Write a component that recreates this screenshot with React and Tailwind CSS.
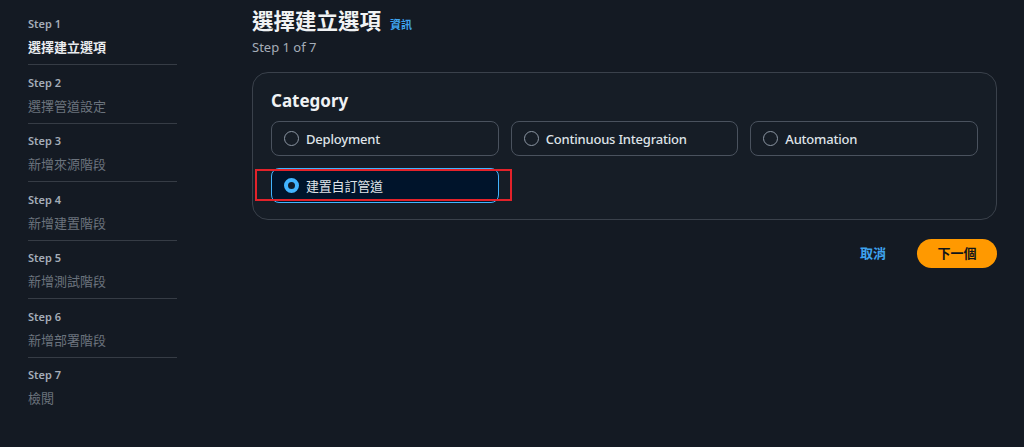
import React from "react";

const steps = [
  ["Step 1", "選擇建立選項"],
  ["Step 2", "選擇管道設定"],
  ["Step 3", "新增來源階段"],
  ["Step 4", "新增建置階段"],
  ["Step 5", "新增測試階段"],
  ["Step 6", "新增部署階段"],
  ["Step 7", "檢閱"],
];

function Radio({ checked }) {
  if (checked) {
    return (
      <span className="w-[15px] h-[15px] rounded-full border-[4px] border-[#42b4ff] bg-[#0f1b2a] shrink-0" />
    );
  }
  return <span className="w-[15px] h-[15px] rounded-full border-[1.5px] border-[#8c96a3] shrink-0" />;
}

function Tile({ label, checked, children }) {
  return (
    <div
      className={
        "relative h-[35px] rounded-[8px] flex items-center gap-[7px] pl-[12px] " +
        (checked ? "border border-[#42b4ff] bg-[#00142b]" : "border border-[#4a525e]")
      }
    >
      <Radio checked={checked} />
      <span
        className={
          "text-[13px] tracking-[-0.2px] text-[#dfe3e8] leading-5 " +
          (checked ? "font-normal" : "font-medium")
        }
      >
        {label}
      </span>
      {children}
    </div>
  );
}

export default function App() {
  return (
    <div
      className="w-[1024px] h-[447px] bg-[#141a23] flex overflow-hidden"
      style={{ fontFamily: '"Noto Sans", "Noto Sans CJK TC", sans-serif' }}
    >
      <aside className="w-[177px] pl-[28px] pt-[16px] shrink-0">
        {steps.map(([s, t], i) => (
          <div
            key={s}
            className={
              (i === 0 ? "" : "pt-[9.5px] ") +
              (i < steps.length - 1 ? "pb-[7px] border-b border-[#363c45]" : "")
            }
          >
            <div className="text-[11px] leading-4 font-semibold text-[#a5adb8]">{s}</div>
            <div
              className={
                "mt-[5px] text-[13px] leading-5 " +
                (i === 0 ? "font-bold text-[#e9ecef]" : "text-[#6b737d]")
              }
            >
              {t}
            </div>
          </div>
        ))}
      </aside>

      <main className="ml-[75px] w-[745px] pt-[7px]">
        <div className="flex items-baseline gap-[9px]">
          <h1 className="text-[21.5px] leading-[27px] font-bold text-[#f0f2f4]">選擇建立選項</h1>
          <span className="text-[11px] font-bold text-[#3ea3ef]">資訊</span>
        </div>
        <div className="mt-[3px] text-[13px] leading-5 text-[#a5adb8]">Step 1 of 7</div>

        <section className="mt-[15px] h-[148px] rounded-[16px] border border-[#3a414b] bg-[#161d26] px-[18px] pt-[16px]">
          <h2 className="text-[17px] leading-6 font-bold text-[#f0f2f4]">Category</h2>
          <div className="mt-[8px] grid grid-cols-3 gap-x-[12px] gap-y-[12px]">
            <Tile label="Deployment" />
            <Tile label="Continuous Integration" />
            <Tile label="Automation" />
            <Tile label="建置自訂管道" checked>
              <div className="absolute left-[-17px] top-[0px] w-[257px] h-[32px] border-2 border-[#e3222a] pointer-events-none" />
            </Tile>
          </div>
        </section>

        <div className="mt-[19px] flex items-center justify-end gap-[31px]">
          <span className="text-[13px] font-bold text-[#3ea3ef]">取消</span>
          <button className="w-[80px] h-[29px] rounded-full bg-[#ff9900] text-[13px] font-bold text-[#0f141a]">
            下一個
          </button>
        </div>
      </main>
    </div>
  );
}
